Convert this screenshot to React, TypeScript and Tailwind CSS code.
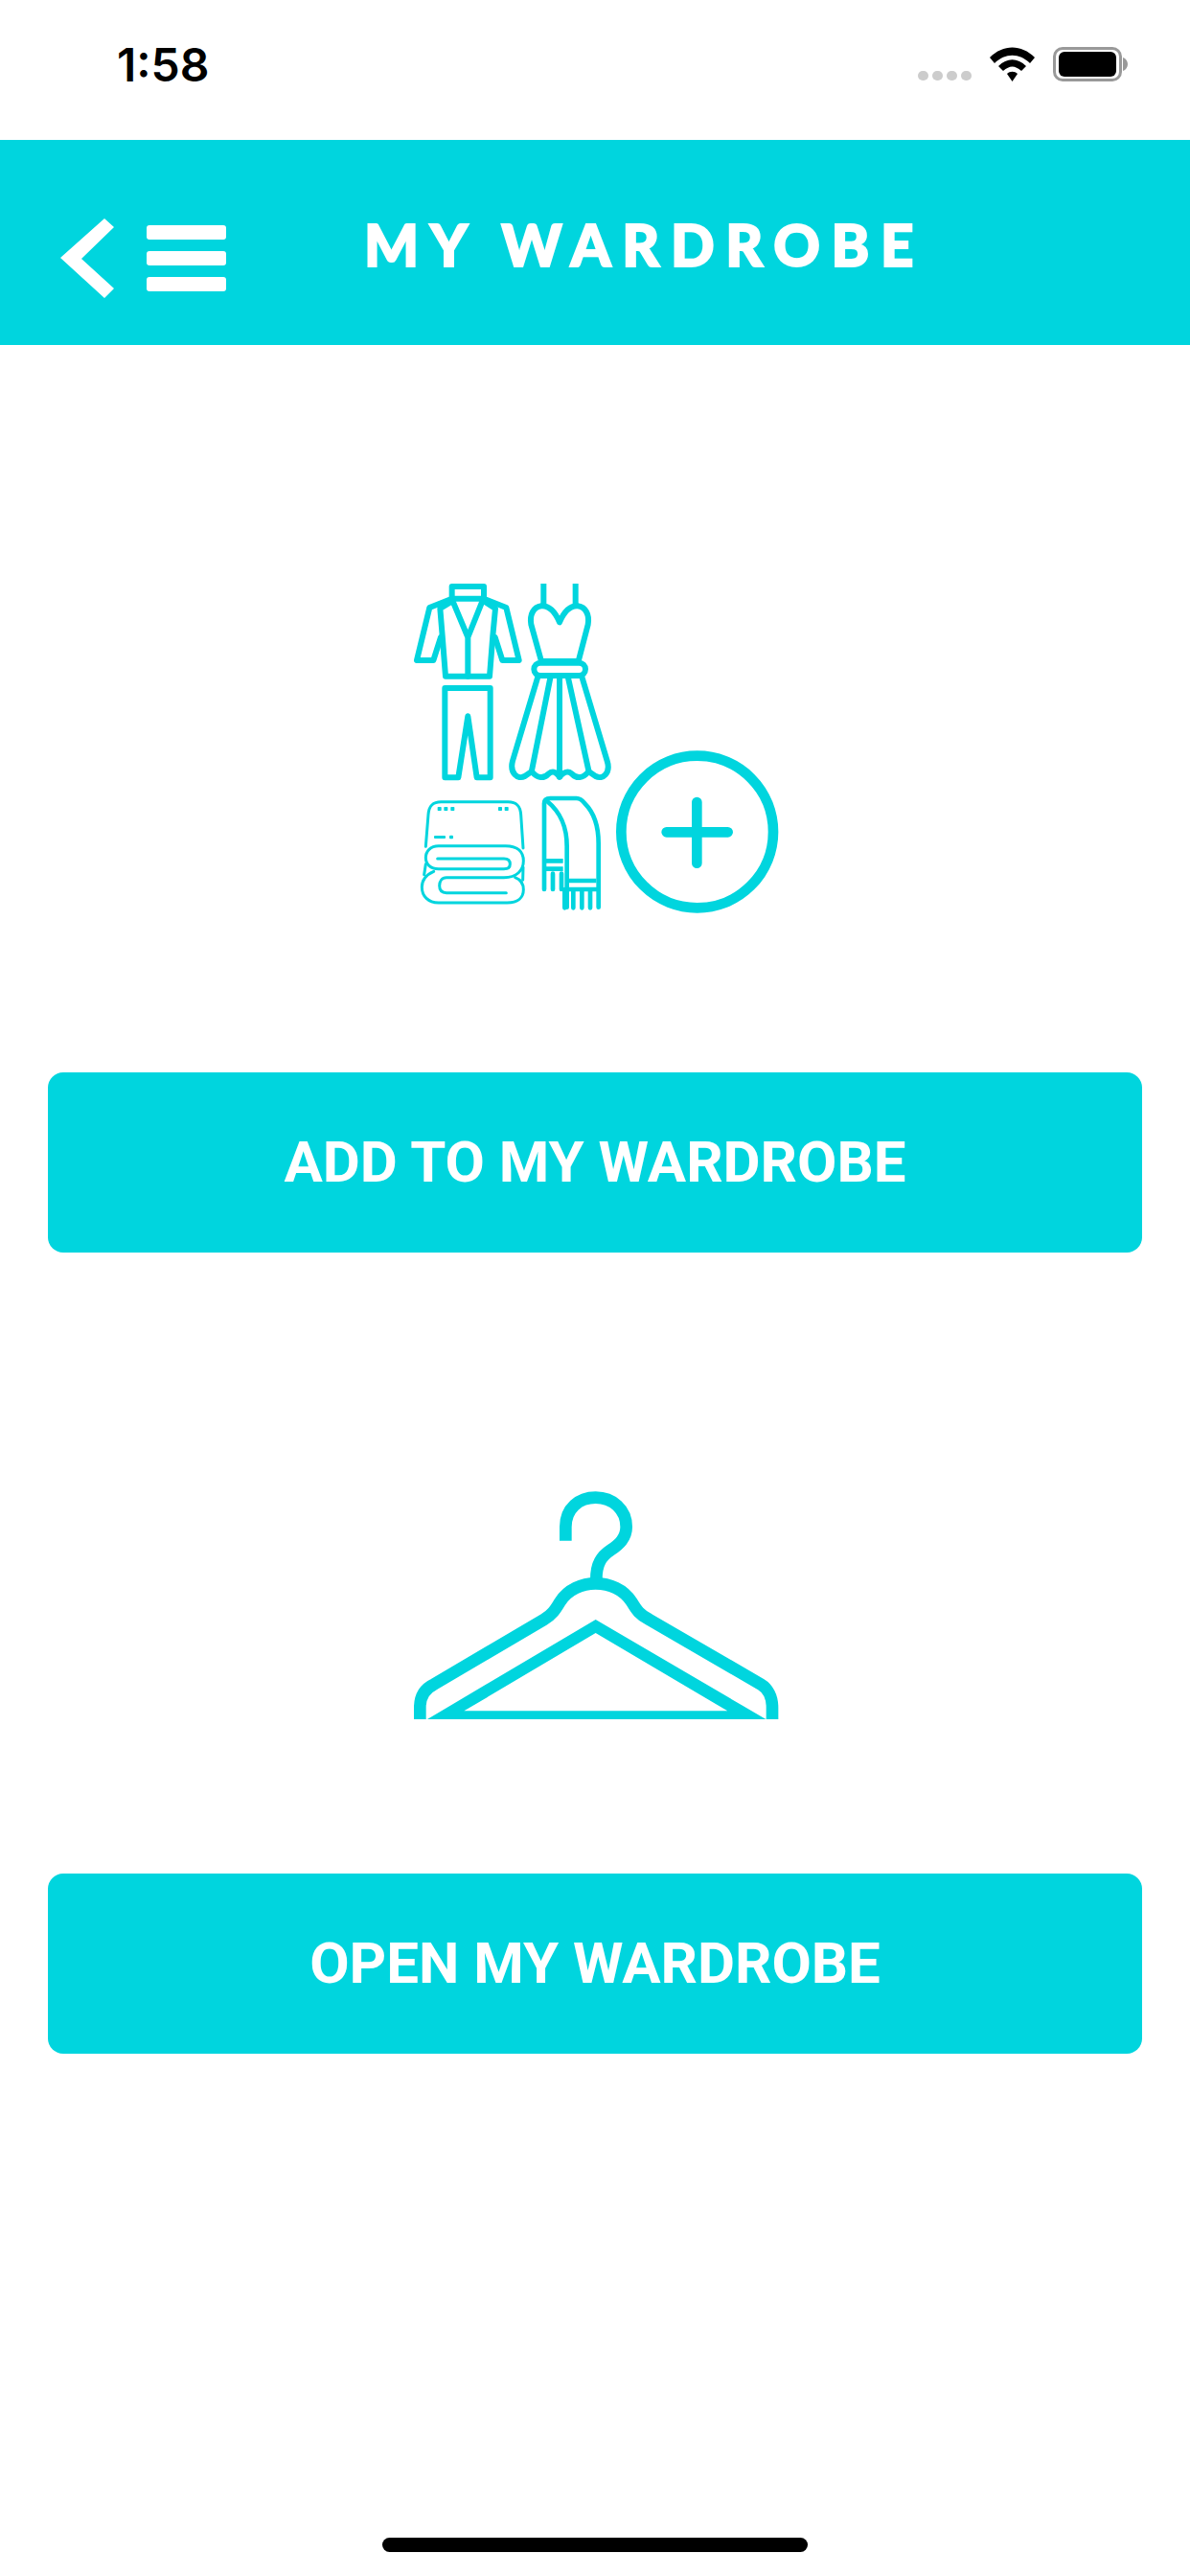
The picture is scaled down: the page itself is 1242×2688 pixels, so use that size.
function WardrobeAddIcon() {
  return (
    <svg width="420" height="390" viewBox="0 0 1260 1170" fill="none" stroke="#00d5de" strokeLinejoin="round" strokeLinecap="round">
      {/* suit */}
      <g strokeWidth="18">
        <path d="M182 66H282V104H182Z" />
        <path d="M182 104L112 132L72 297H124L147 225" />
        <path d="M282 104L352 132L392 297H340L317 225" />
        <path d="M182 112L145 135L152 220L162 347H300L310 220L318 135L282 112" />
        <path d="M186 115L232 225L276 115M232 225V347" />
        <path d="M160 384H302V664H260L232 472L202 664H160Z" />
      </g>
      {/* dress */}
      <g strokeWidth="18">
        <path d="M469 57V125M569 57V125" strokeLinecap="butt" />
        <path d="M519 178C507 150 490 125 462 127C436 131 425 155 430 185L462 300H578L608 185C613 155 602 131 576 127C548 125 531 150 519 178Z" />
        <rect x="439" y="305" width="161" height="40" rx="20" />
        <path d="M450 352L372 612C362 650 388 672 410 660L432 645C450 668 470 668 485 652C500 640 510 650 519 662C530 650 542 640 557 652C572 668 592 668 610 645L632 660C654 672 680 650 668 612L590 352" />
        <path d="M490 352L432 642M519 352V662M546 352L610 642" />
      </g>
      {/* folded blanket */}
      <g strokeWidth="9">
        <path d="M100 880L108 780C110 752 122 740 148 740H358C384 740 396 752 398 780L405 885" />
        <path d="M137 918H345C358 918 364 925 364 935C364 945 358 950 345 950H140C115 950 100 935 100 915C100 895 115 878 140 878H350C390 878 406 898 406 925C406 955 385 977 345 977H165C150 977 143 990 143 1003C143 1018 150 1025 165 1025H352" />
        <path d="M125 958C102 968 88 985 88 1007C88 1035 108 1056 140 1056H355C388 1056 406 1040 406 1015C406 995 395 983 380 977" />
        <path d="M100 935L95 968M405 945L404 985" />
      </g>
      <g fill="#00d5de" stroke="none">
        <rect x="137" y="756" width="12" height="12" rx="2" />
        <rect x="157" y="756" width="12" height="12" rx="2" />
        <rect x="178" y="756" width="12" height="12" rx="2" />
        <rect x="327" y="756" width="12" height="12" rx="2" />
        <rect x="347" y="756" width="12" height="12" rx="2" />
        <rect x="126" y="846" width="36" height="9" rx="3" />
        <rect x="174" y="845" width="12" height="11" rx="3" />
      </g>
      {/* scarf */}
      <g strokeWidth="14">
        <path d="M471 1014V745C471 733 480 729 490 729H572C584 729 590 735 598 745C628 775 641 812 641 870V1070" />
        <path d="M480 738C525 775 542 820 542 880V1070" />
        <path d="M471 925H530M471 950H530M545 987H634M545 1014H640" strokeLinecap="butt" />
        <path d="M498 965V1014M525 965V1014M535 1014V1072M562 1020V1072M589 1020V1072M615 1020V1072" />
      </g>
      {/* plus */}
      <circle cx="950" cy="834" r="238" strokeWidth="32" />
      <path d="M854 835H1046M949 741V932" strokeWidth="32" />
    </svg>
  );
}

function HangerIcon() {
  return (
    <svg width="420" height="280" viewBox="0 0 1260 840" fill="none" stroke="#00d5de" strokeWidth="38">
      <path d="M538 233V190C538 132 580 98 632 98C685 98 728 135 728 190C728 225 705 245 680 262C650 282 634 305 634 354" />
      <path d="M82 792V755C82 715 100 695 125 683L470 480C495 465 505 450 520 425C545 385 590 367 632 367C675 367 720 385 745 425C760 450 770 465 800 480L1150 683C1170 695 1185 720 1185 755V792" />
      <path d="M105 792L632 480L1165 792ZM220 766H1045L632 522Z" fill="#00d5de" stroke="none" fillRule="evenodd" />
    </svg>
  );
}

function ActionButton({ label }: { label: string }) {
  return (
    <button className="flex h-[188px] w-[1142px] items-center justify-center rounded-2xl bg-[#00d5de] font-['Roboto',sans-serif] text-[60px] font-bold text-white">
      {label}
    </button>
  );
}

export default function App() {
  return (
    <div className="flex h-[2688px] w-[1242px] flex-col items-center overflow-hidden bg-white">
      {/* status bar */}
      <div className="flex h-[146px] w-full items-start justify-between pl-[122px] pr-[65px]">
        <span className="mt-[41px] font-['Inter',sans-serif] text-[48px] leading-[54px] font-semibold text-black">1:58</span>
        <div className="mt-[49px] flex items-end">
          <div className="mb-[1px] flex gap-[4px]">
            <div className="h-[10px] w-[11px] rounded-full bg-[#cccccc]" />
            <div className="h-[10px] w-[11px] rounded-full bg-[#cccccc]" />
            <div className="h-[10px] w-[11px] rounded-full bg-[#cccccc]" />
            <div className="h-[10px] w-[11px] rounded-full bg-[#cccccc]" />
          </div>
          <svg className="ml-[19px]" width="47" height="36" viewBox="0 0 47 36" fill="#000">
            <path d="M0 11C14 -3 33 -3 47 11L42 17C31 6 16 6 5 17Z" />
            <path d="M9 20C18 11 29 11 38 20L33 25C26 19 21 19 14 25Z" />
            <path d="M18 28C21 25 26 25 29 28L23.5 36Z" />
          </svg>
          <div className="ml-[19px] flex h-[36px] w-[72px] items-center justify-center rounded-[10px] border-[3px] border-[#999999]">
            <div className="h-[26px] w-[60px] rounded-[6px] bg-black" />
          </div>
          <svg className="mb-[11px] ml-[1px]" width="5" height="14" viewBox="0 0 5 14" fill="#999999">
            <path d="M0 0C3 1 5 4 5 7C5 10 3 13 0 14Z" />
          </svg>
        </div>
      </div>

      {/* header */}
      <header className="flex h-[214px] w-full items-start bg-[#00d5de] pl-[63px]">
        <svg className="mt-[82px]" width="56" height="84" viewBox="0 0 56 84" fill="#fff">
          <path d="M46 0L56 9L22 42L56 73L46 83L0 41Z" />
        </svg>
        <div className="mt-[89px] ml-[34px] flex flex-col gap-[12px]">
          <div className="h-[15px] w-[83px] rounded-[3px] bg-white" />
          <div className="h-[15px] w-[83px] rounded-[3px] bg-white" />
          <div className="h-[15px] w-[83px] rounded-[3px] bg-white" />
        </div>
        <h1 className="mt-[71px] ml-[144px] font-['Lato',sans-serif] text-[60px] leading-[76px] font-black tracking-[11.7px] text-white [-webkit-text-stroke:2px_white]">MY WARDROBE</h1>
      </header>

      <main className="flex flex-1 flex-col items-center">
        <div className="mt-[230px]">
          <WardrobeAddIcon />
        </div>
        <div className="mt-[139px]">
          <ActionButton label="ADD TO MY WARDROBE" />
        </div>
        <div className="mt-[223px]">
          <HangerIcon />
        </div>
        <div className="mt-[145px]">
          <ActionButton label="OPEN MY WARDROBE" />
        </div>
      </main>

      {/* home indicator */}
      <div className="mb-[25px] h-[15px] w-[444px] rounded-full bg-black" />
    </div>
  );
}
